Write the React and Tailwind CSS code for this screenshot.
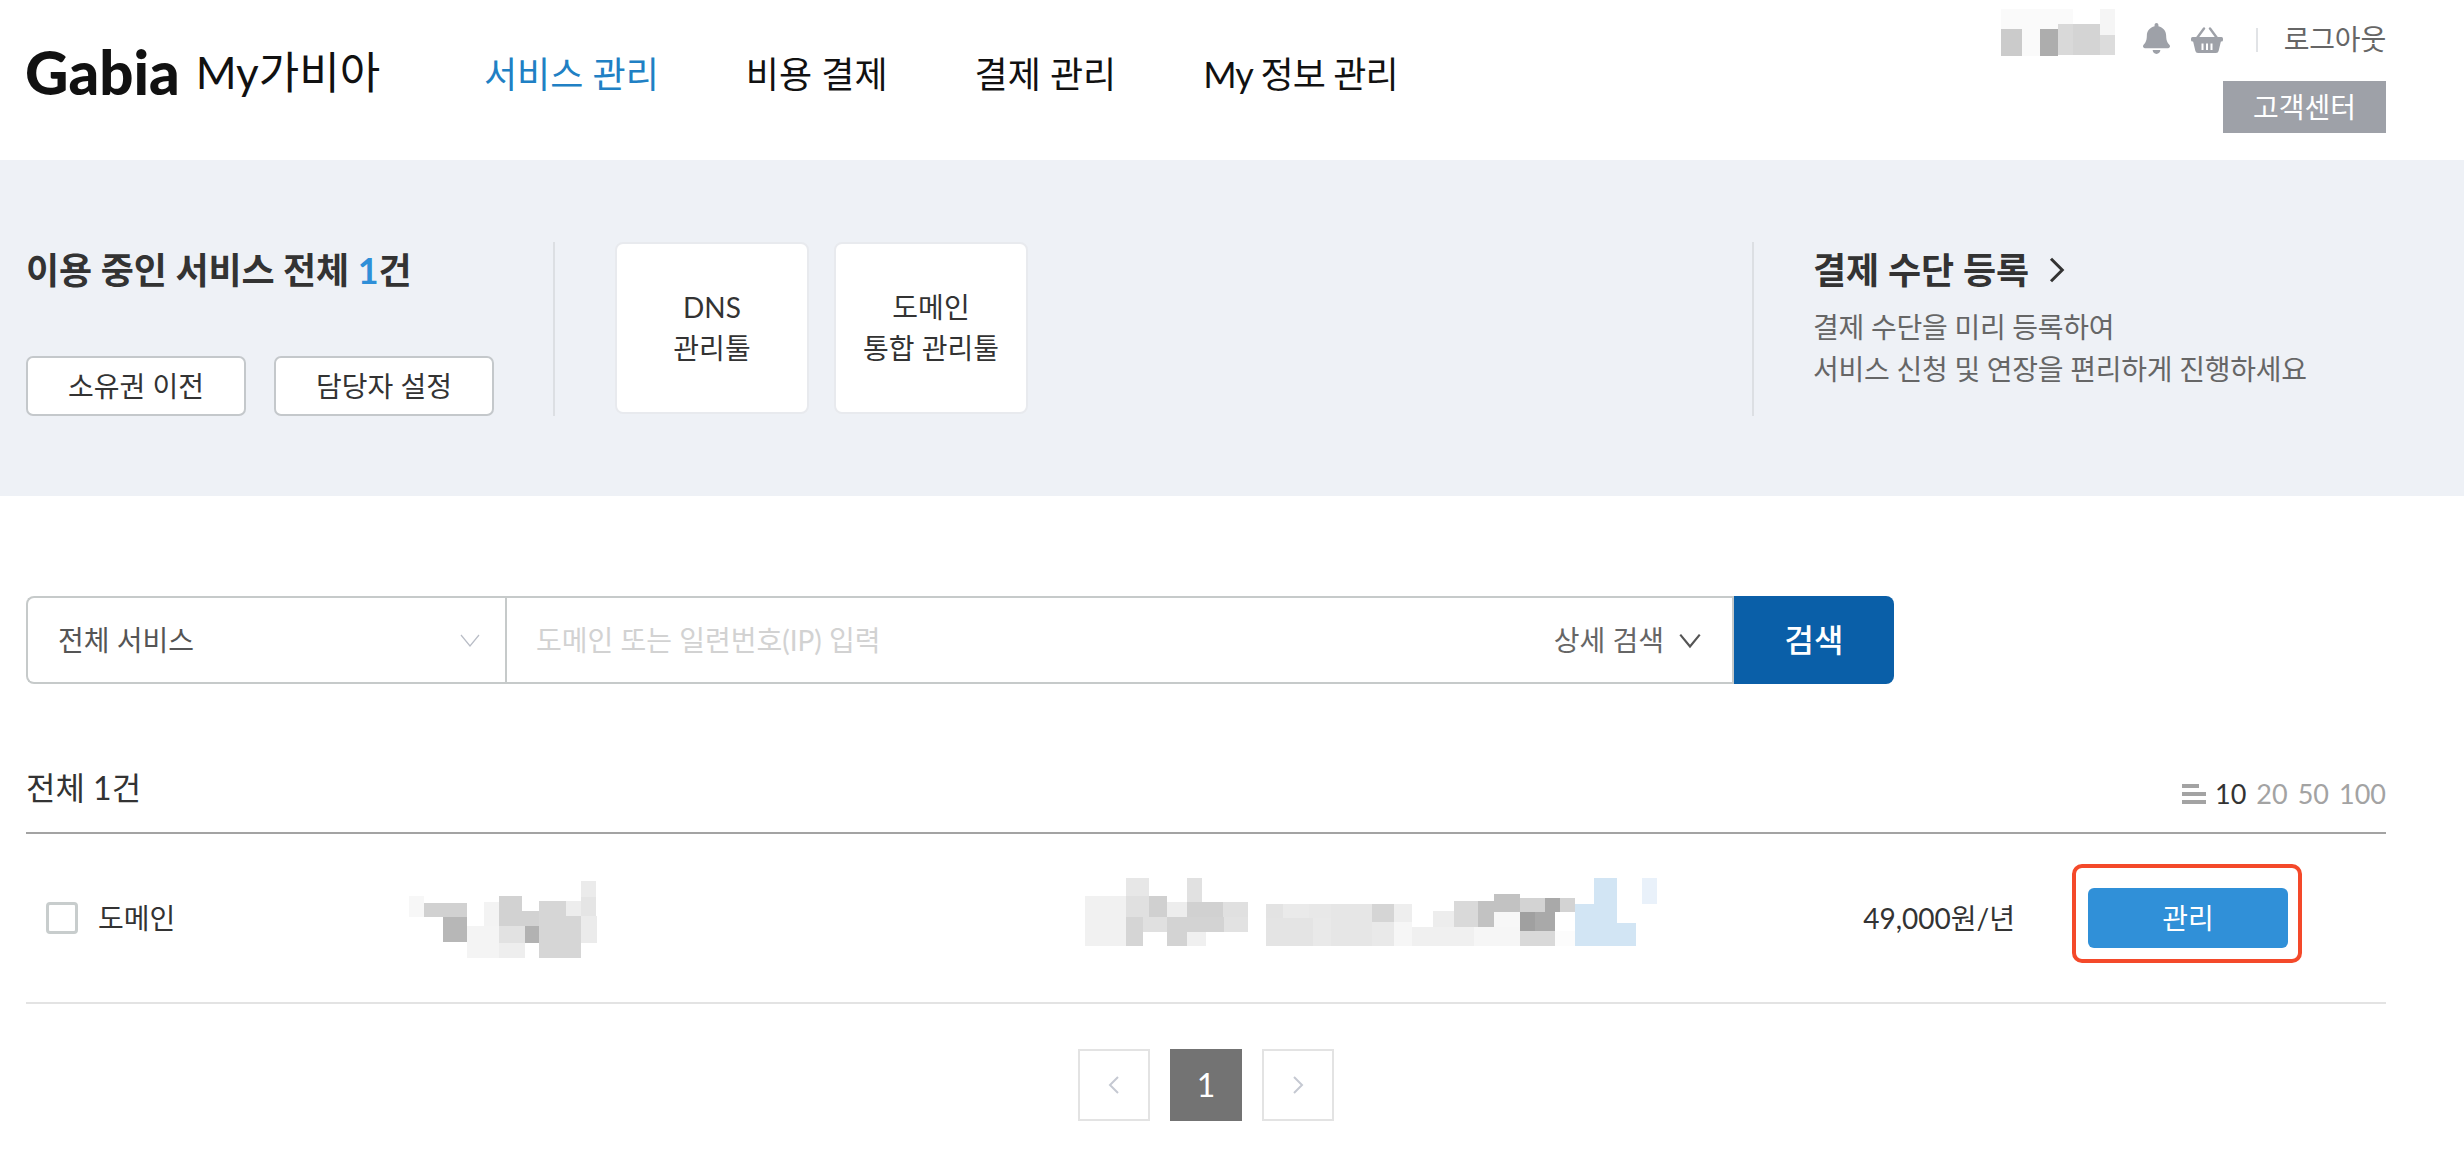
import React from 'react';
import { FaBell } from 'react-icons/fa';

const FONT = "font-['Lato','Noto_Sans_CJK_KR',sans-serif]";

// pixelated (blurred out) blocks, traced from the picture: [x0, y0, x1, y1, colour]
const userBlocks = [
  [123, 27, 340, 87, '#fafafa'], [123, 87, 186, 168, '#cbcbcb'], [186, 87, 240, 168, '#fafafa'],
  [240, 87, 294, 168, '#adadad'], [294, 72, 338, 165, '#d9d9d9'], [338, 72, 420, 165, '#d4d4d4'],
  [420, 27, 465, 105, '#f5f5f5'], [420, 105, 465, 165, '#dcdcdc'],
];

const nameBlocks = [
  [916, 168, 950, 231, '#f7f7f7'], [950, 189, 1046, 231, '#d1d1d1'], [992, 231, 1046, 306, '#b7b7b7'],
  [1084, 186, 1118, 258, '#f3f3f3'], [1046, 258, 1118, 354, '#f4f4f4'], [1118, 168, 1169, 258, '#d2d2d2'],
  [1169, 213, 1207, 258, '#d2d2d2'], [1118, 258, 1176, 308, '#e2e2e2'], [1176, 258, 1207, 308, '#b2b2b2'],
  [1118, 308, 1176, 354, '#eeeeee'], [1207, 183, 1268, 354, '#d6d6d6'], [1268, 183, 1301, 228, '#ededed'],
  [1268, 228, 1301, 354, '#d6d6d6'], [1301, 123, 1335, 171, '#ebebeb'], [1301, 171, 1335, 228, '#e5e5e5'],
  [1301, 228, 1337, 308, '#ebebeb'],
];

const detailBlocks = [
  [190, 108, 282, 258, '#f1f1f1'], [282, 54, 334, 108, '#e7e7e7'], [282, 108, 334, 171, '#e0e0e0'],
  [334, 108, 374, 171, '#d0d0d0'], [374, 126, 419, 171, '#ededed'], [419, 54, 452, 126, '#e1e1e1'],
  [419, 126, 500, 171, '#d1d1d1'], [500, 126, 556, 171, '#e0e0e0'], [282, 171, 320, 258, '#d5d5d5'],
  [320, 171, 374, 216, '#e0e0e0'], [374, 171, 502, 216, '#d3d3d3'], [502, 171, 556, 216, '#e2e2e2'],
  [374, 216, 419, 258, '#d3d3d3'], [419, 216, 461, 258, '#f0f0f0'], [596, 132, 633, 174, '#e3e3e3'],
  [633, 132, 692, 174, '#eaeaea'], [692, 132, 741, 174, '#e8e8e8'], [741, 132, 833, 174, '#e6e6e6'],
  [833, 132, 883, 186, '#d5d5d5'], [883, 132, 923, 186, '#eeeeee'], [596, 174, 701, 258, '#e4e4e4'],
  [701, 174, 741, 258, '#e9e9e9'], [741, 174, 833, 258, '#e6e6e6'], [833, 186, 883, 258, '#e9e9e9'],
  [883, 186, 923, 258, '#f6f6f6'], [923, 201, 1062, 258, '#f0f0f0'], [970, 153, 1017, 201, '#ededed'],
  [1017, 123, 1071, 201, '#d9d9d9'], [1071, 123, 1107, 201, '#c2c2c2'], [1107, 102, 1165, 156, '#c2c2c2'],
  [1107, 156, 1165, 201, '#f7f7f7'], [1062, 201, 1165, 258, '#f6f6f6'], [1165, 114, 1221, 156, '#d3d3d3'],
  [1221, 114, 1254, 156, '#a9a9a9'], [1254, 114, 1288, 156, '#d3d3d3'], [1165, 156, 1198, 213, '#a0a0a0'],
  [1198, 156, 1243, 213, '#a9a9a9'], [1165, 213, 1243, 258, '#d9d9d9'], [1243, 213, 1288, 258, '#fcfcfc'],
  [1288, 132, 1331, 258, '#d2e5f4'], [1331, 54, 1382, 258, '#d2e5f4'], [1382, 189, 1425, 258, '#d2e5f4'],
  [1438, 54, 1472, 132, '#e9f1fa'],
];

const Mosaic = ({ blocks, box, className }) => (
  <svg viewBox={box} preserveAspectRatio="none" className={className} shapeRendering="crispEdges">
    {blocks.map(([x0, y0, x1, y1, fill], i) => (
      <rect key={i} x={x0} y={y0} width={x1 - x0} height={y1 - y0} fill={fill} />
    ))}
  </svg>
);

const Chevron = ({ points, className, width = 2 }) => (
  <svg viewBox="0 0 24 24" fill="none" stroke="currentColor" strokeWidth={width} className={className}>
    <polyline points={points} />
  </svg>
);

const Basket = ({ className }) => (
  <svg viewBox="0 0 32 26" className={className} fill="#9ea1a8">
    <path d="M6 11 L13 1.5 M26 11 L19 1.5" stroke="#9ea1a8" strokeWidth="2.4" strokeLinecap="round" fill="none" />
    <rect x="0" y="10" width="32" height="4.5" rx="1.5" />
    <path d="M2 14 H30 L27.6 24 Q27.2 26 25 26 H7 Q4.8 26 4.4 24 Z" />
    <rect x="10.5" y="16.5" width="2" height="6.5" fill="#fff" />
    <rect x="15" y="16.5" width="2" height="6.5" fill="#fff" />
    <rect x="19.5" y="16.5" width="2" height="6.5" fill="#fff" />
  </svg>
);

const Header = () => (
  <header className="flex h-[160px] pl-[25px] pr-[78px]">
    <div className="flex w-[459px] items-center pb-[16px]">
      <span className="text-[60px] leading-none font-black text-[#111]">Gabia</span>
      <span className="ml-[16px] text-[44px] leading-none text-[#111]">My가비아</span>
    </div>
    <nav className="flex items-center pb-[12px] text-[36px] text-[#111]">
      <a className="text-[#2080c4]">서비스 관리</a>
      <a className="ml-[87px]">비용 결제</a>
      <a className="ml-[87px]">결제 관리</a>
      <a className="ml-[87px] tracking-[-0.9px]">My 정보 관리</a>
    </nav>
    <div className="ml-auto flex flex-col items-end pt-[9px]">
      <div className="flex h-[47px] items-center">
        <Mosaic blocks={userBlocks} box="123 27 342 141" className="h-[47px] w-[114px]" />
        <FaBell className="ml-[28px] mt-[12px] h-[31px] w-[27px] text-[#9ea1a8]" />
        <Basket className="ml-[21px] mt-[14px] h-[26px] w-[32px]" />
        <span className="ml-[33px] mt-[14px] h-[24px] w-[2px] bg-[#e1e3e6]" />
        <span className="ml-[26px] mt-[13px] text-[28px] leading-none tracking-[-0.2px] text-[#666]">로그아웃</span>
      </div>
      <a className="mt-[25px] flex h-[52px] w-[163px] items-center justify-center bg-[#9ea1a8] text-[28px] text-white">고객센터</a>
    </div>
  </header>
);

const Summary = () => (
  <section className="flex h-[336px] bg-[#eef1f6] pl-[26px] pr-[78px] pt-[82px]">
    <div className="flex h-[174px] w-[529px] flex-col border-r-2 border-[#dcdfe3]">
      <h2 className="text-[36px] leading-[56px] font-bold tracking-[-0.1px] text-[#333]">
        이용 중인 서비스 전체 <span className="text-[#2f8fd8]">1</span>건
      </h2>
      <div className="mt-auto flex gap-[28px]">
        <button className="h-[60px] w-[220px] rounded-[7px] border-2 border-[#c4c8cb] bg-white text-[28px] text-[#333]">소유권 이전</button>
        <button className="h-[60px] w-[220px] rounded-[7px] border-2 border-[#c4c8cb] bg-white text-[28px] text-[#333]">담당자 설정</button>
      </div>
    </div>
    <div className="ml-[60px] flex gap-[25px]">
      <a className="flex h-[172px] w-[194px] items-center justify-center rounded-[8px] border-2 border-[#e8eaee] bg-white text-center text-[28px] leading-[41px] text-[#333]">DNS<br />관리툴</a>
      <a className="flex h-[172px] w-[194px] items-center justify-center rounded-[8px] border-2 border-[#e8eaee] bg-white text-center text-[28px] leading-[41px] text-[#333]">도메인<br />통합 관리툴</a>
    </div>
    <div className="ml-auto h-[174px] w-[634px] border-l-2 border-[#dcdfe3] pl-[59px]">
      <h3 className="flex items-center text-[36px] leading-[56px] font-bold text-[#333]">
        결제 수단 등록
        <Chevron points="8 3 17 12 8 21" width={2.4} className="ml-[12px] h-[30px] w-[30px]" />
      </h3>
      <p className="mt-[8px] text-[28px] leading-[42px] tracking-[-0.25px] text-[#666]">
        결제 수단을 미리 등록하여<br />서비스 신청 및 연장을 편리하게 진행하세요
      </p>
    </div>
  </section>
);

const SearchBar = () => (
  <div className="mt-[100px] flex h-[88px] w-[1868px]">
    <div className="flex w-[479px] items-center rounded-l-[8px] border-2 border-r-0 border-[#c6caca] pl-[30px] pr-[23px]">
      <span className="text-[28px] text-[#555]">전체 서비스</span>
      <Chevron points="3 7 12 18 21 7" width={1.2} className="ml-auto h-[24px] w-[24px] text-[#b9bdc6]" />
    </div>
    <div className="flex flex-1 items-center border-2 border-[#c6caca] pl-[29px] pr-[29px]">
      <span className="text-[28px] text-[#d2d2d2]">도메인 또는 일련번호(IP) 입력</span>
      <span className="ml-auto text-[28px] text-[#666]">상세 검색</span>
      <Chevron points="3 7 12 18 21 7" width={2} className="ml-[13px] h-[26px] w-[26px] text-[#555]" />
    </div>
    <button className="w-[160px] rounded-r-[8px] bg-[#0a5fa8] text-[32px] font-medium text-white">검색</button>
  </div>
);

const ListHead = () => (
  <div className="mt-[80px] flex h-[70px] items-start justify-between border-b-2 border-[#a3a3a3]">
    <span className="text-[32px] leading-[48px] text-[#333]">전체 1건</span>
    <div className="mt-[12px] flex items-center text-[27px] leading-[36px] text-[#a3a3a3]">
      <svg viewBox="0 0 24 20" className="mr-[9px] h-[20px] w-[24px]" fill="#a3a3a3">
        <rect x="0" y="0" width="17" height="4" />
        <rect x="0" y="8" width="24" height="4" />
        <rect x="0" y="16" width="24" height="4" />
      </svg>
      <span className="text-[#333]">10</span>
      <span className="ml-[10px]">20</span>
      <span className="ml-[10px]">50</span>
      <span className="ml-[10px]">100</span>
    </div>
  </div>
);

const ServiceRow = () => (
  <div className="flex h-[170px] items-center border-b-2 border-[#e3e3e3]">
    <div className="flex w-[383px] items-center pl-[20px]">
      <span className="h-[32px] w-[32px] rounded-[4px] border-[3px] border-[#c8cdcd] bg-white" />
      <span className="ml-[20px] text-[28px] text-[#333]">도메인</span>
    </div>
    <Mosaic blocks={nameBlocks} box="916 123 421 231" className="mt-[3px] h-[77px] w-[188px]" />
    <Mosaic blocks={detailBlocks} box="190 54 1282 204" className="ml-[488px] mt-[-12px] h-[68px] w-[572px]" />
    <span className="ml-auto text-[28px] text-[#333]">49,000원/년</span>
    <button className="relative ml-[73px] mr-[98px] h-[60px] w-[200px] rounded-[6px] bg-[#3090d8] text-[28px] text-white">
      관리
      <span className="absolute -bottom-[15px] -left-[16px] -right-[14px] -top-[24px] rounded-[10px] border-4 border-[#f4492a]" />
    </button>
  </div>
);

const Pagination = () => (
  <div className="mt-[45px] flex justify-center gap-[20px]">
    <a className="flex h-[72px] w-[72px] items-center justify-center border-2 border-[#e3e3e3]">
      <Chevron points="16 4 8 12 16 20" className="h-[24px] w-[24px] text-[#c5c9d2]" />
    </a>
    <a className="flex h-[72px] w-[72px] items-center justify-center bg-[#737373] text-[32px] text-white">1</a>
    <a className="flex h-[72px] w-[72px] items-center justify-center border-2 border-[#e3e3e3]">
      <Chevron points="8 4 16 12 8 20" className="h-[24px] w-[24px] text-[#c5c9d2]" />
    </a>
  </div>
);

export default function App() {
  return (
    <div className={`min-h-screen bg-white ${FONT}`}>
      <Header />
      <Summary />
      <main className="pl-[26px] pr-[78px]">
        <SearchBar />
        <ListHead />
        <ServiceRow />
        <Pagination />
      </main>
    </div>
  );
}
